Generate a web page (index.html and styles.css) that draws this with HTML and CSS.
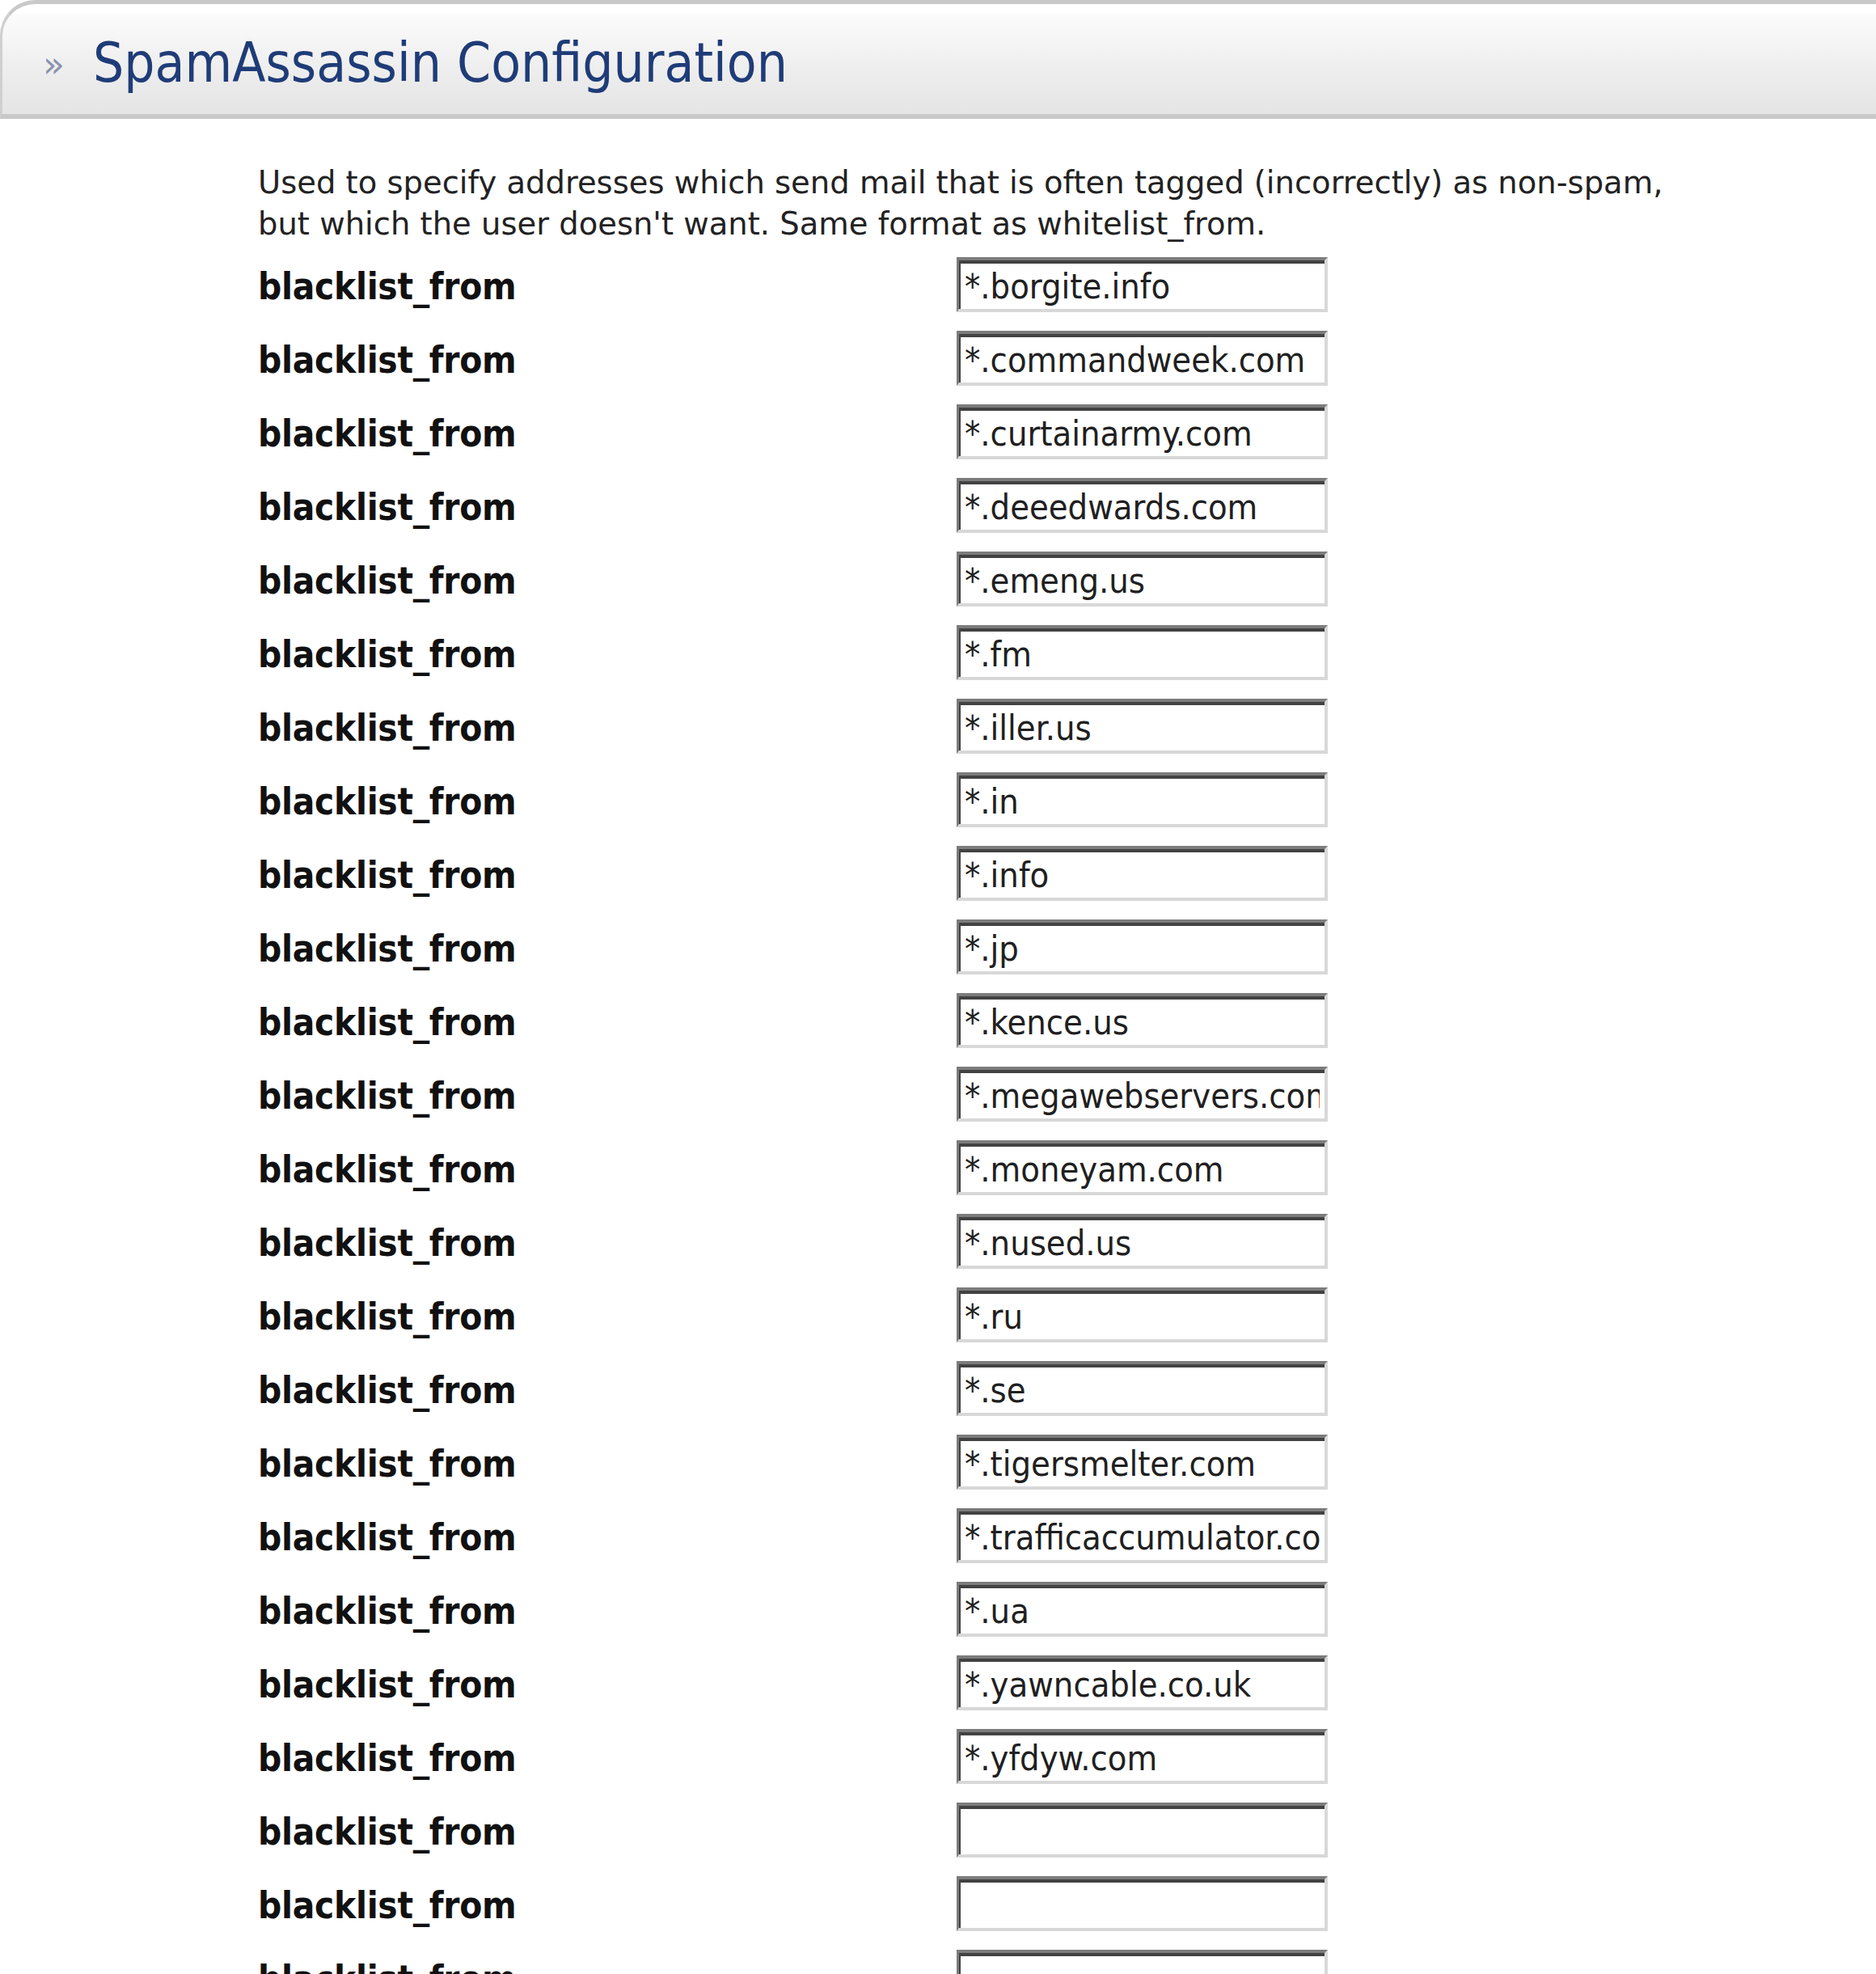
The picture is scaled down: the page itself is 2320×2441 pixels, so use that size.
FILE: index.html
```html
<!DOCTYPE html>
<html lang="en">
<head>
<meta charset="utf-8">
<title>SpamAssassin Configuration</title>
<link rel="stylesheet" href="styles.css">
</head>
<body>
<div class="title-bar">
  <span class="crumb">&raquo;</span>
  <h1 class="title">SpamAssassin Configuration</h1>
</div>

<div class="content">
  <p class="help">Used to specify addresses which send mail that is often tagged (incorrectly) as non-spam,<br>but which the user doesn't want. Same format as whitelist_from.</p>

  <div class="rules">
    <label class="rule-name">blacklist_from</label><input class="field" type="text" value="*.borgite.info">
    <label class="rule-name">blacklist_from</label><input class="field" type="text" value="*.commandweek.com">
    <label class="rule-name">blacklist_from</label><input class="field" type="text" value="*.curtainarmy.com">
    <label class="rule-name">blacklist_from</label><input class="field" type="text" value="*.deeedwards.com">
    <label class="rule-name">blacklist_from</label><input class="field" type="text" value="*.emeng.us">
    <label class="rule-name">blacklist_from</label><input class="field" type="text" value="*.fm">
    <label class="rule-name">blacklist_from</label><input class="field" type="text" value="*.iller.us">
    <label class="rule-name">blacklist_from</label><input class="field" type="text" value="*.in">
    <label class="rule-name">blacklist_from</label><input class="field" type="text" value="*.info">
    <label class="rule-name">blacklist_from</label><input class="field" type="text" value="*.jp">
    <label class="rule-name">blacklist_from</label><input class="field" type="text" value="*.kence.us">
    <label class="rule-name">blacklist_from</label><input class="field" type="text" value="*.megawebservers.com">
    <label class="rule-name">blacklist_from</label><input class="field" type="text" value="*.moneyam.com">
    <label class="rule-name">blacklist_from</label><input class="field" type="text" value="*.nused.us">
    <label class="rule-name">blacklist_from</label><input class="field" type="text" value="*.ru">
    <label class="rule-name">blacklist_from</label><input class="field" type="text" value="*.se">
    <label class="rule-name">blacklist_from</label><input class="field" type="text" value="*.tigersmelter.com">
    <label class="rule-name">blacklist_from</label><input class="field" type="text" value="*.trafficaccumulator.com">
    <label class="rule-name">blacklist_from</label><input class="field" type="text" value="*.ua">
    <label class="rule-name">blacklist_from</label><input class="field" type="text" value="*.yawncable.co.uk">
    <label class="rule-name">blacklist_from</label><input class="field" type="text" value="*.yfdyw.com">
    <label class="rule-name">blacklist_from</label><input class="field" type="text" value="">
    <label class="rule-name">blacklist_from</label><input class="field" type="text" value="">
    <label class="rule-name">blacklist_from</label><input class="field" type="text" value="">
  </div>
</div>
</body>
</html>
```

FILE: styles.css
```css
html, body {
  margin: 0;
  padding: 0;
  background: #ffffff;
}

body {
  font-family: "DejaVu Sans", Verdana, sans-serif;
  color: #1c1c1c;
}

/* page heading strip */
.title-bar {
  display: flex;
  align-items: baseline;
  height: 136px;
  padding-left: 50px;
  border-top: 5px solid #c9c9c9;
  border-left: 3px solid #cfcfcf;
  border-bottom: 6px solid #c9c9c9;
  border-top-left-radius: 44px;
  background: linear-gradient(to bottom, #ffffff 0, #ffffff 10px, #fbfbfb 14px, #f3f3f3 55px, #ebebeb 95px, #e5e5e5 100%);
}

.crumb {
  position: relative;
  top: -6px;
  font-family: "DejaVu Sans", sans-serif;
  font-size: 44px;
  color: #8a93ad;
  width: 62px;
}

.title {
  margin: 0;
  font-family: "DejaVu Sans Condensed", "DejaVu Sans", sans-serif;
  font-stretch: semi-condensed;
  font-weight: normal;
  font-size: 67px;
  line-height: 146px;
  color: #1f3c78;
}

.content {
  padding: 53px 0 0 319px;
}

.help {
  margin: 0 0 4px 0;
  font-family: "DejaVu Sans", Verdana, sans-serif;
  font-size: 38.5px;
  line-height: 51px;
  color: #222222;
}

.rules {
  display: grid;
  grid-template-columns: 864px 459px;
  grid-auto-rows: 91px;
  align-items: center;
}

.rule-name {
  padding-top: 6px;
  font-family: "DejaVu Sans Condensed", "DejaVu Sans", sans-serif;
  font-stretch: semi-condensed;
  font-weight: bold;
  font-size: 45.5px;
  letter-spacing: -0.3px;
  color: #111111;
}

/* sunken text box */
.field {
  box-sizing: border-box;
  width: 459px;
  height: 68px;
  margin: 0;
  padding: 5px 6px 0 7px;
  border-style: solid;
  border-width: 4px 4px 4px 3px;
  border-color: #7c7c7c #d8d8d8 #d8d8d8 #7c7c7c;
  box-shadow: inset 2px 4px 0 #424242;
  border-radius: 0;
  background: #ffffff;
  outline: none;
  font-family: "DejaVu Sans Condensed", "DejaVu Sans", sans-serif;
  font-stretch: semi-condensed;
  font-size: 43px;
  color: #202020;
}
```
